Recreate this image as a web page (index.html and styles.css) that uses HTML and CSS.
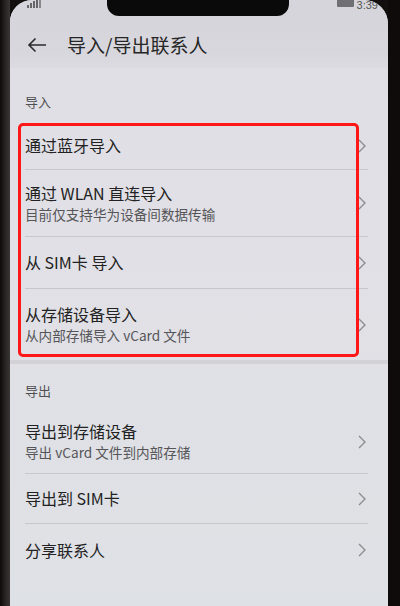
FILE: index.html
```html
<!DOCTYPE html>
<html lang="zh">
<head>
<meta charset="utf-8">
<link rel="stylesheet" href="styles.css">
</head>
<body>
<div class="phone">
  <div class="bezel-left"></div>
  <div class="screen">
    <div class="status">
      <svg class="signal" width="16" height="8" viewBox="0 0 16 8"><rect x="0" y="5" width="2" height="3" fill="#666"/><rect x="3" y="3" width="2" height="5" fill="#666"/><rect x="6" y="1" width="2" height="7" fill="#666"/><rect x="9" y="0" width="2" height="8" fill="#666"/><rect x="12" y="0" width="2" height="8" fill="#888"/></svg>
      <div class="status-right">
        <span class="battery"></span>
        <span class="time">3:39</span>
      </div>
    </div>
    <header class="appbar">
      <svg class="back" width="20" height="16" viewBox="0 0 20 16"><path d="M19 8H2M8.5 1.5L2 8l6.5 6.5" fill="none" stroke="#2b2b2b" stroke-width="1.6"/></svg>
      <h1 class="title">导入/导出联系人</h1>
    </header>
    <main class="content">
      <div class="section-label first">导入</div>
      <div class="row r1"><div class="txt"><div class="t">通过蓝牙导入</div></div><svg class="chev" width="8" height="14" viewBox="0 0 8 14"><path d="M1 1l6 6-6 6" fill="none" stroke="#8a8a8e" stroke-width="1.3"/></svg></div>
      <div class="row r2"><div class="txt"><div class="t">通过 WLAN 直连导入</div><div class="s">目前仅支持华为设备间数据传输</div></div><svg class="chev" width="8" height="14" viewBox="0 0 8 14"><path d="M1 1l6 6-6 6" fill="none" stroke="#8a8a8e" stroke-width="1.3"/></svg></div>
      <div class="row r3"><div class="txt"><div class="t">从 SIM卡 导入</div></div><svg class="chev" width="8" height="14" viewBox="0 0 8 14"><path d="M1 1l6 6-6 6" fill="none" stroke="#8a8a8e" stroke-width="1.3"/></svg></div>
      <div class="row r4 last"><div class="txt"><div class="t">从存储设备导入</div><div class="s">从内部存储导入 vCard 文件</div></div><svg class="chev" width="8" height="14" viewBox="0 0 8 14"><path d="M1 1l6 6-6 6" fill="none" stroke="#8a8a8e" stroke-width="1.3"/></svg></div>
      <div class="band"></div>
      <div class="section-label second">导出</div>
      <div class="row r5"><div class="txt"><div class="t">导出到存储设备</div><div class="s">导出 vCard 文件到内部存储</div></div><svg class="chev" width="8" height="14" viewBox="0 0 8 14"><path d="M1 1l6 6-6 6" fill="none" stroke="#8a8a8e" stroke-width="1.3"/></svg></div>
      <div class="row r6"><div class="txt"><div class="t">导出到 SIM卡</div></div><svg class="chev" width="8" height="14" viewBox="0 0 8 14"><path d="M1 1l6 6-6 6" fill="none" stroke="#8a8a8e" stroke-width="1.3"/></svg></div>
      <div class="row r7 last"><div class="txt"><div class="t">分享联系人</div></div><svg class="chev" width="8" height="14" viewBox="0 0 8 14"><path d="M1 1l6 6-6 6" fill="none" stroke="#8a8a8e" stroke-width="1.3"/></svg></div>
    </main>
  </div>
  <div class="bezel-right"></div>
  <div class="notch"></div>
  <div class="highlight"></div>
</div>
</body>
</html>
```

FILE: styles.css
```css
* { box-sizing: border-box; }
html, body { margin: 0; padding: 0; }
body {
  width: 400px;
  height: 606px;
  overflow: hidden;
  background: #120f0e;
  font-family: "Noto Sans CJK SC", "Noto Sans", sans-serif;
  color: #262626;
}
.phone {
  position: relative;
  display: flex;
  width: 400px;
  height: 606px;
}
.bezel-left {
  width: 10px;
  background: linear-gradient(90deg, #0d0b0a 0%, #2a2624 60%, #3a3636 100%);
}
.bezel-right {
  width: 12px;
  background: #0e0b0a;
}
.screen {
  flex: 1;
  display: flex;
  flex-direction: column;
  background: linear-gradient(180deg, #dfdee4 0%, #e1e0e6 40%, #dee1e5 100%);
  border-radius: 22px 24px 0 0;
  overflow: hidden;
}
.status {
  height: 20px;
  display: flex;
  justify-content: space-between;
  align-items: flex-start;
  padding: 0 10px 0 17px;
  background: #d6d5db;
}
.status-right {
  display: flex;
  align-items: flex-start;
  gap: 3px;
}
.battery {
  width: 17px;
  height: 7px;
  margin-top: 0;
  background: #6f6f74;
  border-radius: 0 0 1px 1px;
}
.time {
  font-family: "Liberation Sans", sans-serif;
  font-size: 11px;
  line-height: 11px;
  color: #555;
}
.appbar {
  height: 48px;
  display: flex;
  align-items: center;
  padding-left: 17px;
  background: linear-gradient(180deg, #d6d5db 0%, #d8d7dd 70%, #dcdbe1 100%);
}
.back { margin-right: 20px; margin-top: 2px; }
.title {
  margin: 0;
  font-size: 19px;
  font-weight: 400;
  color: #262626;
}
.content {
  display: flex;
  flex-direction: column;
}
.section-label {
  font-size: 13px;
  color: #4f4f52;
  padding-left: 15px;
  line-height: 18px;
}
.section-label.first { padding-top: 25px; padding-bottom: 11px; }
.section-label.second { padding-top: 18px; padding-bottom: 10px; }
.row {
  display: flex;
  align-items: center;
  margin: 0 20px 0 15px;
  border-bottom: 1px solid #c7c7cc;
}
.row.last { border-bottom: none; }
.r1 { height: 48px; }
.r2 { height: 67px; }
.r3 { height: 52px; }
.r4 { height: 71px; }
.r5 { height: 64px; }
.r6 { height: 50px; }
.r7 { height: 52px; }
.txt { flex: 1; }
.t {
  font-size: 16px;
  line-height: 21px;
  color: #222;
}
.s {
  font-size: 13.6px;
  line-height: 19px;
  color: #555558;
  margin-top: 1px;
}
.chev { margin-right: 2px; flex: none; }
.band {
  height: 4px;
  background: #d2d2d7;
}
.notch {
  position: absolute;
  left: 107px;
  top: 0;
  width: 182px;
  height: 16px;
  background: #0b0a0a;
  border-radius: 0 0 12px 12px;
}
.highlight {
  position: absolute;
  left: 18px;
  top: 123px;
  width: 341px;
  height: 234px;
  border: 3.5px solid #ff1616;
  border-radius: 5px;
}
```
